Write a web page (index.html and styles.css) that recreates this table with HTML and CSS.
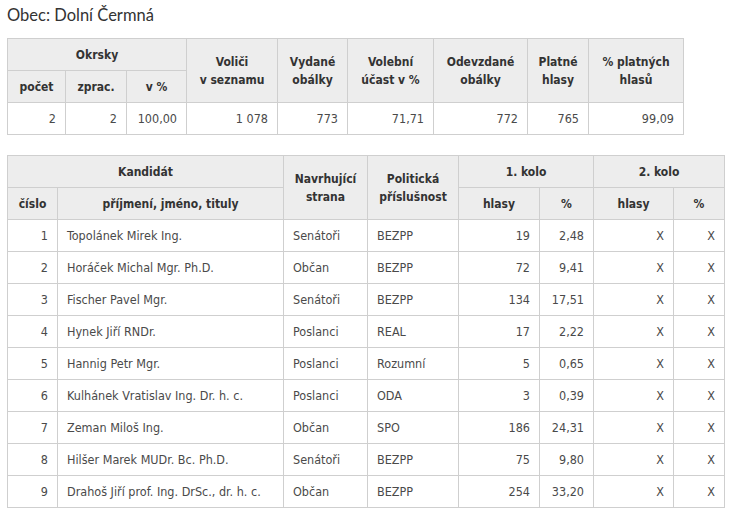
FILE: index.html
```html
<!DOCTYPE html>
<html lang="cs">
<head>
<meta charset="utf-8">
<title>Obec: Dolní Čermná</title>
<link rel="stylesheet" href="styles.css">
</head>
<body>
<h1 class="title">Obec: Dolní Čermná</h1>
<table class="grid summary">
  <colgroup>
    <col style="width:58px"><col style="width:61px"><col style="width:60px"><col style="width:91px"><col style="width:70px"><col style="width:86px"><col style="width:94px"><col style="width:61px"><col style="width:95px">
  </colgroup>
  <thead>
    <tr>
      <th colspan="3">Okrsky</th>
      <th rowspan="2">Voliči<br>v seznamu</th>
      <th rowspan="2">Vydané<br>obálky</th>
      <th rowspan="2">Volební<br>účast v %</th>
      <th rowspan="2">Odevzdané<br>obálky</th>
      <th rowspan="2">Platné<br>hlasy</th>
      <th rowspan="2">% platných<br>hlasů</th>
    </tr>
    <tr>
      <th>počet</th><th>zprac.</th><th>v %</th>
    </tr>
  </thead>
  <tbody>
    <tr>
      <td class="num">2</td><td class="num">2</td><td class="num">100,00</td><td class="num">1 078</td><td class="num">773</td><td class="num">71,71</td><td class="num">772</td><td class="num">765</td><td class="num">99,09</td>
    </tr>
  </tbody>
</table>

<table class="grid candidates">
  <colgroup>
    <col style="width:50px"><col style="width:226px"><col style="width:84px"><col style="width:91px"><col style="width:81px"><col style="width:54px"><col style="width:80px"><col style="width:51px">
  </colgroup>
  <thead>
    <tr>
      <th colspan="2">Kandidát</th>
      <th rowspan="2">Navrhující<br>strana</th>
      <th rowspan="2">Politická<br>příslušnost</th>
      <th colspan="2">1. kolo</th>
      <th colspan="2">2. kolo</th>
    </tr>
    <tr>
      <th>číslo</th><th>příjmení, jméno, tituly</th><th>hlasy</th><th>%</th><th>hlasy</th><th>%</th>
    </tr>
  </thead>
  <tbody>
    <tr><td class="num">1</td><td>Topolánek Mirek Ing.</td><td>Senátoři</td><td>BEZPP</td><td class="num">19</td><td class="num">2,48</td><td class="num">X</td><td class="num">X</td></tr>
    <tr><td class="num">2</td><td>Horáček Michal Mgr. Ph.D.</td><td>Občan</td><td>BEZPP</td><td class="num">72</td><td class="num">9,41</td><td class="num">X</td><td class="num">X</td></tr>
    <tr><td class="num">3</td><td>Fischer Pavel Mgr.</td><td>Senátoři</td><td>BEZPP</td><td class="num">134</td><td class="num">17,51</td><td class="num">X</td><td class="num">X</td></tr>
    <tr><td class="num">4</td><td>Hynek Jiří RNDr.</td><td>Poslanci</td><td>REAL</td><td class="num">17</td><td class="num">2,22</td><td class="num">X</td><td class="num">X</td></tr>
    <tr><td class="num">5</td><td>Hannig Petr Mgr.</td><td>Poslanci</td><td>Rozumní</td><td class="num">5</td><td class="num">0,65</td><td class="num">X</td><td class="num">X</td></tr>
    <tr><td class="num">6</td><td>Kulhánek Vratislav Ing. Dr. h. c.</td><td>Poslanci</td><td>ODA</td><td class="num">3</td><td class="num">0,39</td><td class="num">X</td><td class="num">X</td></tr>
    <tr><td class="num">7</td><td>Zeman Miloš Ing.</td><td>Občan</td><td>SPO</td><td class="num">186</td><td class="num">24,31</td><td class="num">X</td><td class="num">X</td></tr>
    <tr><td class="num">8</td><td>Hilšer Marek MUDr. Bc. Ph.D.</td><td>Senátoři</td><td>BEZPP</td><td class="num">75</td><td class="num">9,80</td><td class="num">X</td><td class="num">X</td></tr>
    <tr><td class="num">9</td><td>Drahoš Jiří prof. Ing. DrSc., dr. h. c.</td><td>Občan</td><td>BEZPP</td><td class="num">254</td><td class="num">33,20</td><td class="num">X</td><td class="num">X</td></tr>
  </tbody>
</table>
</body>
</html>
```

FILE: styles.css
```css
html, body {
  margin: 0;
  padding: 0;
  background: #ffffff;
}
body {
  padding: 0 7px;
  font-family: "DejaVu Sans", sans-serif;
  font-stretch: condensed;
  font-size: 12px;
  color: #4a4a4a;
}
.title {
  margin: 0;
  padding-top: 4px;
  height: 38px;
  box-sizing: border-box;
  font-family: Lato, "Open Sans", sans-serif;
  font-stretch: normal;
  font-weight: 400;
  font-size: 16.5px;
  line-height: 22px;
  color: #333333;
}
.grid {
  border-collapse: collapse;
  table-layout: fixed;
}
.summary {
  width: 677px;
  margin-bottom: 20px;
}
.candidates {
  width: 718px;
}
.grid th,
.grid td {
  border: 1px solid #cfcfcf;
  height: 32px;
  padding: 0 9px;
  box-sizing: border-box;
  line-height: 18px;
  vertical-align: middle;
  white-space: nowrap;
  overflow: hidden;
}
.grid th {
  background: #ededed;
  color: #333333;
  font-weight: bold;
  text-align: center;
}
.grid td {
  text-align: left;
  font-size: 12.5px;
}
.grid td.num {
  text-align: right;
}
```
